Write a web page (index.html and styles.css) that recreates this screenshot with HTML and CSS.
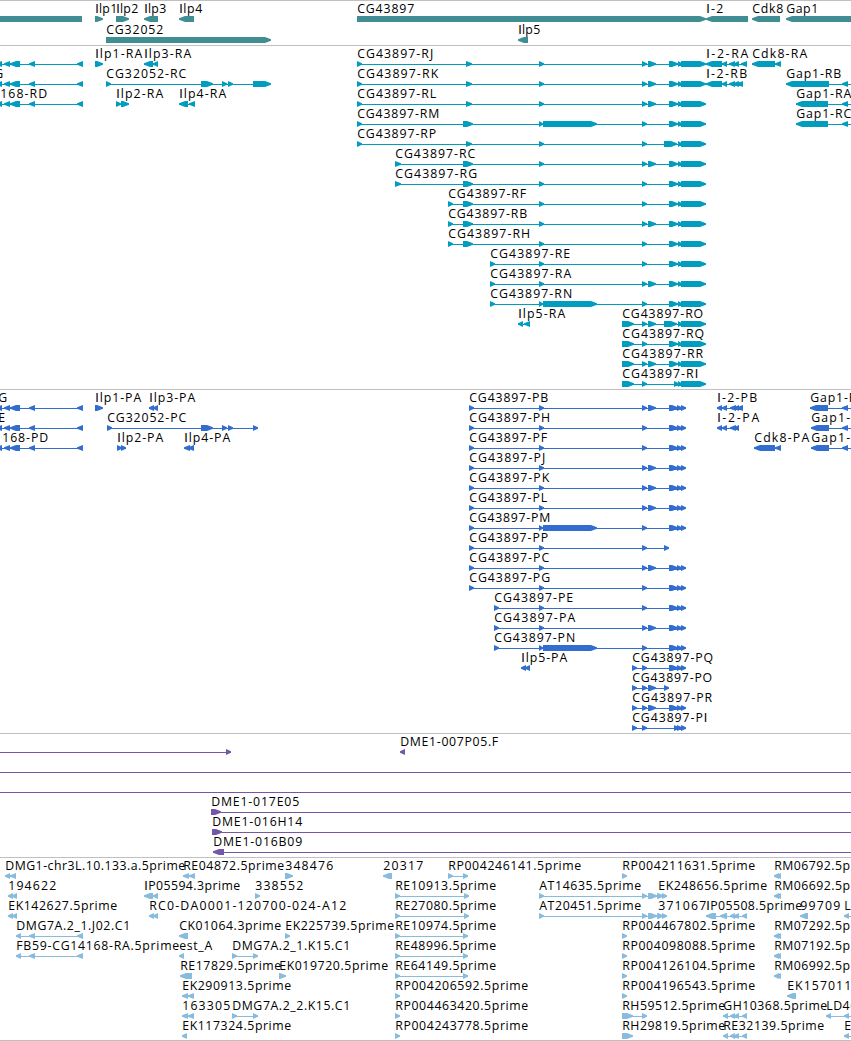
FILE: index.html
```
<!DOCTYPE html>
<html lang="en">
<head>
<meta charset="utf-8">
<title>Genome tracks</title>
<link rel="stylesheet" href="styles.css">
</head>
<body>
<main class="browser" id="browser"></main>
<script src="tracks.js"></script>
</body>
</html>
```
FILE: styles.css
```
body {
  margin: 0;
  background: #fff;
}
.browser {
  width: 851px;
  height: 1041px;
  overflow: hidden;
  display: flex;
  flex-direction: column;
}
.track {
  box-sizing: border-box;
  flex: none;
  border-top: 1px solid #c0c0c0;
  padding: 1px 0 2px;
  display: flex;
  flex-direction: column;
}
.row {
  display: block;
  width: 851px;
  height: 20px;
  overflow: visible;
}
.label {
  font-family: "Open Sans", "Noto Sans", sans-serif;
  font-size: 12.3px;
  fill: #000;
}
.plain {
  font-family: "Liberation Sans", sans-serif;
  font-size: 12.6px;
}
.genes { fill: #408e93; padding-bottom: 1px; }
.genes .row { height: 21px; }
.transcripts { fill: #009dbf; }
.proteins { fill: #326ecf; }
.clones { fill: #7556a7; }
.ests {
  fill: #88bcde;
  padding-bottom: 1px;
  border-bottom: 1px solid #c0c0c0;
}
```
FILE: tracks.js
```
// Each feature: label | label start | label end | strand | exons.
// A strand of "-" draws plain blocks without a pointed end.
const T5 = "669-678 678-682 681-706";
const TS = "648-656 " + T5;
const P5 = "669-678 677-682 681-686";
const PS = "648-656 " + P5;
const LEFT = "|<|-4-2 4-10 10-20 29-35 77-83";
const AT = ">|539-544 642-647 648-657 657-662 662-667";
const cg = (s, x, end, ex) => `CG43897-${s}|${x}|${end}|>|${ex}`;

const tracks = {
  genes: [
    ["||0|-|-9-82", "Ilp1|95|117|>|95-103", "Ilp2|116|138|>|116-129", "Ilp3|144|166|<|144-158", "Ilp4|179|202|<|179-194",
     "CG43897|357|414|>|357-706", "I-2|706|723|<|706-748", "Cdk8|752|783|<|752-780", "Gap1|786|818|<|786-860"],
    ["CG32052|106|163|>|106-271", "Ilp5|518|540|<|518-528"]
  ],
  transcripts: [
    ["||0" + LEFT, "Ilp1-RA|95|142|>|95-103", "Ilp3-RA|144|191|<|144-153 153-158",
     cg("RJ", 357, 433, "357-362 466-472 539-544 642-647 " + TS),
     "I-2-RA|706|748|<|706-722 722-727 729-735 734-739 741-747", "Cdk8-RA|752|807|<|752-775 775-781"],
    ["G|-6|3" + LEFT, "CG32052-RC|106|186|>|106-111 201-213 222-227 228-233 253-271",
     cg("RK", 357, 438, "357-362 466-472 539-544 642-647 " + TS),
     "I-2-RB|706|747|<|706-722 722-727 729-735 733-739 737-743", "Gap1-RB|786|841|<|786-829 842-848 860-866"],
    ["168-RD|0|47" + LEFT, "Ilp2-RA|116|163|>|116-121 121-129", "Ilp4-RA|179|226|<|179-188 189-195",
     cg("RL", 357, 436, "357-362 466-472 539-544 642-647 " + TS), "Gap1-RA|796|851|<|796-828 842-848 860-866"],
    [cg("RM", 357, 439, "357-362 463-473 539-543 543-597 642-647 " + T5), "Gap1-RC|796|851|<|796-828 842-848 860-866"],
    [cg("RP", 357, 436, "357-362 466-472 539-544 642-647 664-677 678-682 681-706")],
    [cg("RC", 395, 475, "395-401 463-473 539-544 642-647 " + TS)],
    [cg("RG", 395, 477, "395-401 463-473 539-544 642-647 " + T5)],
    [cg("RF", 448, 526, "448-453 463-473 539-544 642-647 " + T5)],
    [cg("RB", 448, 527, "448-453 463-473 539-544 642-647 " + TS)],
    [cg("RH", 448, 530, "448-453 463-473 539-544 642-647 " + T5)],
    [cg("RE", 490, 570, "490-495 539-544 642-647 " + T5)],
    [cg("RA", 490, 571, "490-495 539-544 642-647 " + TS)],
    [cg("RN", 490, 572, "490-495 539-543 543-597 642-647 " + T5)],
    ["Ilp5-RA|518|565|<|518-523 524-530", cg("RO", 622, 703, "622-634 642-647 648-656 664-677 678-682 681-706")],
    [cg("RQ", 622, 704, "622-634 642-647 " + T5)],
    [cg("RR", 622, 703, "622-634 642-647 " + TS)],
    [cg("RI", 622, 698, "622-634 642-647 674-679 678-682 681-706")]
  ],
  proteins: [
    ["G|-2|7" + LEFT, "Ilp1-PA|95|141|>|95-103", "Ilp3-PA|149|195|<|149-154 153-158",
     cg("PB", 469, 548, "469-474 539-544 642-647 " + PS),
     "I-2-PB|717|757|<|717-722 722-727 730-736 734-739 737-743", "Gap1-P|810|856|<|810-828 842-848 860-866"],
    ["E|-2|6" + LEFT, "CG32052-PC|107|186|>|107-112 201-213 222-227 228-233 253-258",
     cg("PH", 469, 550, "469-474 539-544 642-647 " + P5),
     "I-2-PA|717|759|<|717-722 722-727 730-736 734-739", "Gap1-|811|850|<|811-829 842-848 860-866"],
    ["168-PD|2|48" + LEFT, "Ilp2-PA|117|163|>|117-122 121-126", "Ilp4-PA|184|230|<|184-190 188-194",
     cg("PF", 469, 547, "469-474 539-544 642-647 " + P5),
     "Cdk8-PA|754|809|<|754-775 775-781", "Gap1-|811|850|<|811-829 842-848 860-866"],
    [cg("PJ", 469, 545, "469-474 539-544 642-647 " + PS)],
    [cg("PK", 469, 549, "469-474 539-544 642-647 " + PS)],
    [cg("PL", 469, 547, "469-474 539-544 642-647 " + PS)],
    [cg("PM", 469, 550, "469-474 539-543 543-597 642-647 " + P5)],
    [cg("PP", 469, 548, "469-474 539-544 642-647 664-669")],
    [cg("PC", 469, 549, "469-474 539-544 642-647 " + PS)],
    [cg("PG", 469, 550, "469-474 539-544 642-647 " + P5)],
    [cg("PE", 494, 573, "494-499 539-544 642-647 " + P5)],
    [cg("PA", 494, 575, "494-499 539-544 642-647 " + PS)],
    [cg("PN", 494, 575, "494-499 539-543 543-597 642-647 " + P5)],
    ["Ilp5-PA|521|567|<|521-526 525-530", cg("PQ", 632, 713, "632-637 642-647 " + P5)],
    [cg("PO", 632, 712, "632-637 642-647 648-656 664-669")],
    [cg("PR", 632, 712, "632-637 642-647 " + PS)],
    [cg("PI", 632, 707, "632-637 642-647 674-679 677-682 681-686")]
  ],
  clones: [
    ["||0|>|-9--4 226-231", "DME1-007P05.F|400|498|<|400-405"],
    ["||0|>|-9--4 860-865"],
    ["||0|>|-9--4 860-865"],
    ["DME1-017E05|211|299|>|211-221 860-865"],
    ["DME1-016H14|212|302|>|212-222 860-865"],
    ["DME1-016B09|213|302|<|213-224 860-865"]
  ],
  ests: [
    ["DMG1-chr3L.10.133.a.5prime|5|185|<|5-10 10-16", "RE04872.5prime|183|284|<|183-189 189-195", "348476|285|333|>|285-293",
     "20317|383|423|<|383-392", "RP004246141.5prime|448|581|>|448-453 463-468", "RP004211631.5prime|622|755|>|622-627",
     "RM06792.5prime|774|878|<|774-779 776-781"],
    ["194622|8|56|<|8-13 12-17", "IP05594.3prime|144|240|<|144-153 153-158", "338552|255|303|>|255-260",
     "RE10913.5prime|395|496|>|395-400 464-469", "AT14635.5prime|539|641|" + AT, "EK248656.5prime|658|767|>|658-663",
     "RM06692.5prime|774|878|<|774-779 776-781"],
    ["EK142627.5prime|8|117|<|8-13 12-17", "RC0-DA0001-120700-024-A12|149|346|<|149-154 153-158",
     "RE27080.5prime|395|496|>|395-400 464-469", "AT20451.5prime|539|641|" + AT, "371067|658|706|>|658-663",
     "IP05508.5prime|706|802|<|706-716 720-727 730-735 734-739 742-747", "99709|800|840|<|800-808", "L|844|851|<|844-849 860-865"],
    ["DMG7A.2_1.J02.C1|16|130|<|16-21 29-35 77-83", "CK01064.3prime|179|281|<|179-188", "EK225739.5prime|285|394|>|285-290",
     "RE10974.5prime|395|496|>|395-400 463-468", "RP004467802.5prime|622|755|>|622-627", "RM07292.5prime|774|878|<|774-779 776-781"],
    ["FB59-CG14168-RA.5prime|16|179|<|16-21 29-35 77-83", "est_A|179|212|<|179-184", "DMG7A.2_1.K15.C1|232|350|>|232-237 253-258",
     "RE48996.5prime|395|496|>|395-400 463-468", "RP004098088.5prime|622|755|>|622-627", "RM07192.5prime|774|878|<|774-779 776-781"],
    ["RE17829.5prime|180|281|<|180-192", "EK019720.5prime|279|388|>|279-286", "RE64149.5prime|395|496|>|395-400 463-468",
     "RP004126104.5prime|622|755|>|622-627", "RM06992.5prime|774|878|<|774-779 776-781"],
    ["EK290913.5prime|182|291|<|182-188 188-194", "RP004206592.5prime|395|528|>|395-400", "RP004196543.5prime|622|755|>|622-627",
     "EK157011|787|851|<|787-796"],
    ["163305|182|230|<|182-188 188-194", "DMG7A.2_2.K15.C1|232|350|>|232-237 253-258", "RP004463420.5prime|395|528|>|395-400",
     "RH59512.5prime|622|725|>|622-633 642-647", "GH10368.5prime|723|827|<|723-728 730-735 734-739 742-747", "LD46|826|857|<|826-831 844-849 860-865"],
    ["EK117324.5prime|182|291|<|182-187", "RP004243778.5prime|395|528|>|395-400", "RH29819.5prime|622|725|>|622-633",
     "RE32139.5prime|723|824|<|723-728 730-735 734-739 742-747", "E|844|852|<|844-849 860-865"]
  ]
};

const NS = "http://www.w3.org/2000/svg";
function add(parent, name, attrs) {
  const el = document.createElementNS(NS, name);
  for (const k in attrs) el.setAttribute(k, attrs[k]);
  parent.appendChild(el);
  return el;
}

// Block 6px high with a pointed end on the strand side.
function exonPath(a, b, strand) {
  if (strand === "-") return `M${a} 14H${b}V20H${a}Z`;
  const tip = Math.min(6, b - a);
  return strand === ">"
    ? `M${a} 14H${b - tip}L${b} 16.3V17.7L${b - tip} 20H${a}Z`
    : `M${b} 14H${a + tip}L${a} 16.3V17.7L${a + tip} 20H${b}Z`;
}

for (const [name, rows] of Object.entries(tracks)) {
  const track = document.createElement("section");
  track.className = "track " + name;
  for (const features of rows) {
    const svg = add(track, "svg", { class: "row" });
    for (const f of features) {
      const [label, x, end, strand, list] = f.split("|");
      const exons = list.split(" ").map(e => {
        const m = e.match(/^(-?\d+)-(-?\d+)$/);
        return [+m[1], +m[2]];
      });
      const first = exons[0][0], last = exons[exons.length - 1][1];
      if (exons.length > 1) add(svg, "rect", { x: first, y: 17, width: last - first, height: 1 });
      add(svg, "path", { d: exons.map(e => exonPath(e[0], e[1], strand)).join("") });
      if (label) {
        const t = add(svg, "text", { class: "label", x: +x + 0.2, y: 11, textLength: end - x });
        // Capital I is set in a face whose I has no serifs.
        for (const part of label.split(/(I)/).filter(Boolean)) {
          if (part === "I") add(t, "tspan", { class: "plain" }).textContent = part;
          else t.append(part);
        }
      }
    }
  }
  document.getElementById("browser").appendChild(track);
}
```
